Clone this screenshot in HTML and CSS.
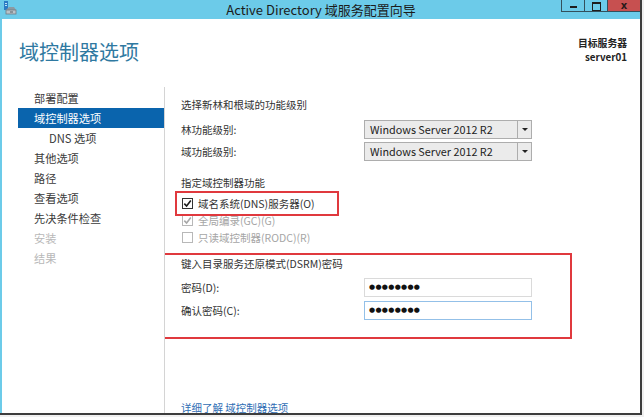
FILE: index.html
```html
<!DOCTYPE html>
<html>
<head>
    <meta charset="UTF-8">
    <title>Active Directory 域服务配置向导</title>
    <link rel="stylesheet" href="styles.css">
</head>
<body>
    <div class="window">
        <!-- Title bar -->
        <div class="titlebar">
            <svg class="app-icon" width="14" height="14" viewBox="0 0 14 14">
                <rect x="1" y="0" width="4" height="9" fill="#2b7cc4"/>
                <rect x="2" y="2" width="2" height="1" fill="#bfe3f7"/>
                <rect x="2" y="4" width="2" height="1" fill="#bfe3f7"/>
                <path d="M3 9 L6 6 L11 6 L13 9 Z" fill="#8c9aa3"/>
                <rect x="3" y="9" width="10" height="4" fill="#b9c3c9" stroke="#6f7c84" stroke-width="0.8"/>
                <rect x="7" y="10.5" width="3" height="1" fill="#56636b"/>
            </svg>
            <div class="title">Active Directory 域服务配置向导</div>
            <div class="controls">
                <span class="btn min"></span>
                <span class="btn max"></span>
                <span class="btn close">x</span>
            </div>
        </div>

        <div class="client">
            <div class="head">
                <h1>域控制器选项</h1>
                <div class="target">
                    <div>目标服务器</div>
                    <div>server01</div>
                </div>
            </div>

            <div class="body">
                <!-- Wizard steps -->
                <ul class="nav">
                    <li>部署配置</li>
                    <li class="active">域控制器选项</li>
                    <li class="sub">DNS 选项</li>
                    <li>其他选项</li>
                    <li>路径</li>
                    <li>查看选项</li>
                    <li>先决条件检查</li>
                    <li class="off">安装</li>
                    <li class="off">结果</li>
                </ul>

                <div class="main">
                    <div class="caption">选择新林和根域的功能级别</div>
                    <div class="field first">
                        <label>林功能级别:</label>
                        <div class="select"><span>Windows Server 2012 R2</span><i class="arrow"></i></div>
                    </div>
                    <div class="field">
                        <label>域功能级别:</label>
                        <div class="select"><span>Windows Server 2012 R2</span><i class="arrow"></i></div>
                    </div>

                    <div class="caption roles">指定域控制器功能</div>
                    <div class="check dns">
                        <span class="box"><svg viewBox="0 0 9 9"><path d="M1.3 4.6 L3.6 7 L7.8 1.6"/></svg></span>
                        域名系统(DNS)服务器(O)
                    </div>
                    <div class="check disabled">
                        <span class="box"><svg viewBox="0 0 9 9"><path d="M1.3 4.6 L3.6 7 L7.8 1.6"/></svg></span>
                        全局编录(GC)(G)
                    </div>
                    <div class="check disabled">
                        <span class="box"></span>
                        只读域控制器(RODC)(R)
                    </div>

                    <div class="dsrm">
                        <div class="caption">键入目录服务还原模式(DSRM)密码</div>
                        <div class="field first">
                            <label>密码(D):</label>
                            <div class="input"><span class="dots">●●●●●●●●</span></div>
                        </div>
                        <div class="field">
                            <label>确认密码(C):</label>
                            <div class="input focus"><span class="dots">●●●●●●●●</span></div>
                        </div>
                    </div>

                    <a class="more">详细了解 域控制器选项</a>
                </div>
            </div>
        </div>
    </div>
</body>
</html>
```

FILE: styles.css
```css
* { box-sizing: border-box; }
body { margin: 0; background: #f0f0f0; font-family: "Noto Sans CJK SC", sans-serif; color: #333; }

.window { width: 642px; height: 415px; background: #6ccbe9; padding-left: 2px; border-right: 2px solid #3d3d3d; border-bottom: 2px solid #3d3d3d; display: flex; flex-direction: column; }

/* title bar */
.titlebar { height: 19px; flex: none; display: grid; grid-template-columns: 1fr auto 1fr; align-items: start; }
.app-icon { margin: 1px 0 0 1px; }
.title { font-size: 13px; line-height: 19px; color: #1b1b1b; }
.controls { justify-self: end; display: flex; }
.btn { height: 12px; border: 1px solid #33505c; border-top: none; display: flex; justify-content: center; }
.min { width: 24px; }
.min::after { content: ""; width: 7px; height: 2px; background: #1e1e1e; margin-top: 6px; }
.max { width: 23px; border-left: none; }
.max::after { content: ""; width: 7px; height: 6px; border: 1px solid #1e1e1e; border-top-width: 2px; margin-top: 2px; }
.close { width: 32px; border-left: none; border-right: none; background: #c75050; font: bold 10px/11px "DejaVu Sans", sans-serif; color: #2a1a1a; }

/* client area */
.client { flex: 1; background: #fff; display: flex; flex-direction: column; overflow: hidden; }
.head { height: 68px; flex: none; display: flex; justify-content: space-between; align-items: flex-start; padding: 18px 13px 0 17px; }
h1 { margin: 1px 0 0; font-size: 20px; font-weight: normal; line-height: 28px; color: #2f79a1; }
.target { text-align: right; font-size: 9.8px; font-weight: bold; line-height: 13.5px; color: #222; }

.body { flex: 1; display: flex; min-height: 0; }

.nav { width: 163px; flex: none; border-right: 1px solid #d4d4d4; list-style: none; margin: 0; padding: 1px 0 0; font-size: 11.2px; }
.nav li { height: 20px; line-height: 20px; padding-left: 32px; color: #3a3a3a; }
.nav .active { margin-left: 16px; padding-left: 16px; background: #0a64ad; color: #fff; }
.nav .sub { padding-left: 47px; }
.nav .off { color: #b8b8b8; }

.main { flex: 1; display: flex; flex-direction: column; padding: 9px 0 0 16px; font-size: 10.5px; overflow: hidden; }
.caption { line-height: 18px; }
.caption.roles { margin-top: 13px; }

.field { display: flex; align-items: center; height: 19px; margin-top: 3px; }
.field.first { margin-top: 6px; }
.field label { width: 183px; flex: none; }
.dsrm .field { margin-top: 4px; }
.dsrm .field.first { margin-top: 5px; }

.select { width: 168px; height: 19px; border: 1px solid #adadad; background: #ebebeb; display: flex; }
.select span { flex: 1; padding-left: 5px; font-size: 10.8px; line-height: 17px; color: #222; }
.arrow { width: 14px; border-left: 1px solid #adadad; display: flex; align-items: center; justify-content: center; }
.arrow::after { content: ""; border-left: 3px solid transparent; border-right: 3px solid transparent; border-top: 3px solid #222; }

.check { display: flex; align-items: center; height: 17px; padding-left: 1px; }
.check.dns { margin-top: 3px; position: relative; }
.check.dns::after { content: ""; position: absolute; left: -6px; top: -4px; width: 160px; height: 21px; border: 2px solid #e0393e; }
.box { width: 11px; height: 11px; border: 1px solid #333; background: #fff; margin-right: 5px; display: flex; }
.box svg { width: 9px; height: 9px; }
.box path { fill: none; stroke: #1e1e1e; stroke-width: 1.6; }
.check.disabled { color: #a6a6a6; }
.check.disabled .box { border-color: #b8b8b8; }
.check.disabled .box path { stroke: #a8a8a8; }

.dsrm { margin: 7px 0 0 -19px; width: 410px; border: 2px solid #e0393e; padding: 0 0 17px 17px; }
.input { width: 168px; height: 19px; border: 1px solid #dadada; background: #fff; padding-left: 4px; display: flex; align-items: center; }
.input.focus { border-color: #93c0e8; }
.dots { font-family: "DejaVu Sans", sans-serif; font-size: 7px; letter-spacing: 0.3px; color: #111; line-height: 1; }

.more { margin-top: auto; margin-bottom: -3px; line-height: 16px; color: #2e6db4; }
```
